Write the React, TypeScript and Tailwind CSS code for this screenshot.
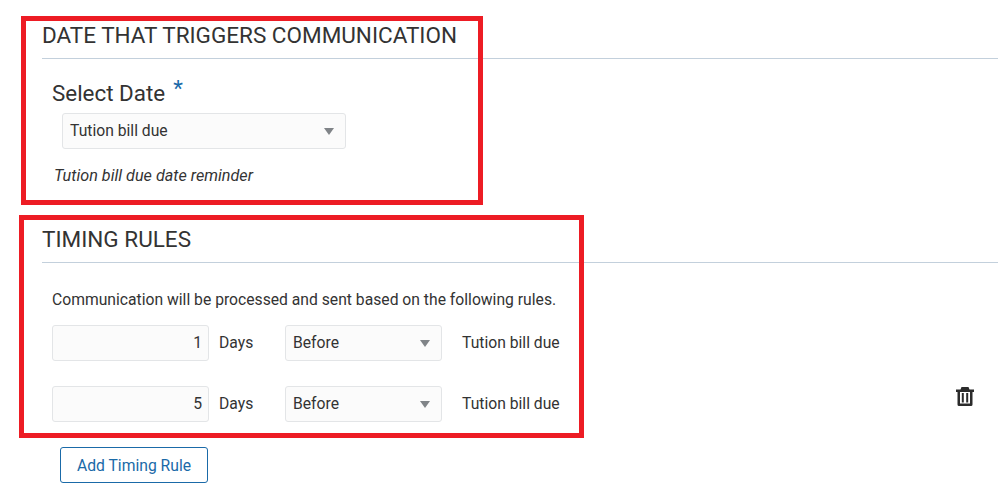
function Caret() {
  return <span className="h-0 w-0 border-x-[5px] border-t-[7px] border-x-transparent border-t-[#808488]" />;
}

function Select({ value, width }: { value: string; width: string }) {
  return (
    <div className={`flex h-[36px] items-center justify-between rounded-[3px] border border-[#e3e5e7] bg-[#fbfbfb] pl-[7px] pr-[11px] ${width}`}>
      <span>{value}</span>
      <Caret />
    </div>
  );
}

function Rule({ days }: { days: number }) {
  return (
    <div className="flex h-[36px] items-center">
      <div className="flex h-[36px] w-[157px] items-center justify-end rounded-[3px] border border-[#e3e5e7] bg-[#fbfbfb] pr-[6px]">{days}</div>
      <span className="ml-[10px] w-[66px]">Days</span>
      <Select value="Before" width="w-[157px]" />
      <span className="ml-[20px]">Tution bill due</span>
    </div>
  );
}

function TrashIcon() {
  return (
    <svg className="absolute left-[956px] top-[387px] h-[19px] w-[18px] text-[#2b2b2b]" viewBox="0 0 18 19" fill="currentColor">
      <path d="M5.500 0h7l1 2.500H18v2.500H0V2.500h4.500z" />
      <path d="M1.500 5H4v11.500h10V5h2.500v12.500A1.500 1.500 0 0 1 15 19H3a1.500 1.500 0 0 1-1.500-1.500z" />
      <rect x="5.800" y="6" width="2" height="9.500" />
      <rect x="10.200" y="6" width="2" height="9.500" />
    </svg>
  );
}

export default function App() {
  return (
    <div className="relative h-[493px] w-[998px] overflow-hidden bg-white font-['Roboto',sans-serif] text-[15.7px] text-[#333]">
      <div className="pl-[42px] pt-[20px]">
        <h2 className="h-[39px] border-b border-[#c3d0dc] text-[22.5px] leading-[31px]">DATE THAT TRIGGERS COMMUNICATION</h2>
        <div className="pl-[10px] pt-[18px]">
          <div className="flex h-[32px] items-start text-[22.4px] leading-[32px]">
            Select Date <span className="ml-[8px] -translate-y-[5px] text-[#1a6aa8]">*</span>
          </div>
          <div className="ml-[10px] mt-[4px]">
            <Select value="Tution bill due" width="w-[284px]" />
          </div>
          <p className="ml-[2px] mt-[17px] text-[16.2px] italic leading-[20px]">Tution bill due date reminder</p>
        </div>
      </div>
      <div className="pl-[42px] pt-[38px]">
        <h2 className="h-[39px] border-b border-[#c3d0dc] text-[22.5px] leading-[31px]">TIMING RULES</h2>
        <div className="pl-[10px] pt-[27px]">
          <p className="leading-[20px]">Communication will be processed and sent based on the following rules.</p>
          <div className="mt-[15px] flex flex-col gap-[25px]">
            <Rule days={1} />
            <Rule days={5} />
          </div>
          <button className="ml-[8px] mt-[25px] h-[36px] w-[148px] rounded-[3px] border border-[#1a6aa8] pt-px text-[#1a6aa8]">Add Timing Rule</button>
        </div>
      </div>
      <TrashIcon />
      <div className="pointer-events-none absolute left-[21px] top-[16px] h-[189px] w-[462px] border-[5px] border-[#ed1c24]" />
      <div className="pointer-events-none absolute left-[19px] top-[215px] h-[223px] w-[565px] border-[5px] border-[#ed1c24]" />
    </div>
  );
}
